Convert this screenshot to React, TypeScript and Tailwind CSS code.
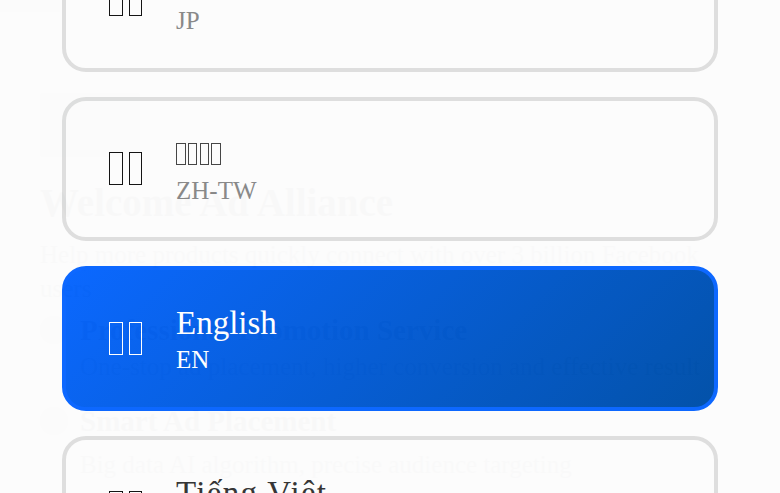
import React from "react";

const languages = [
  { label: "Japan", name: "日本語", glyphs: 0, code: "JP" },
  { label: "Taiwan", name: "繁體中文", glyphs: 4, code: "ZH-TW" },
  { label: "United States", name: "English", code: "EN", active: true },
  { label: "Vietnam", name: "Tiếng Việt", code: "VI" },
];

// missing-glyph boxes, the way the flags and CJK names come out in the picture
const Tofu = ({ className }: { className: string }) => <span className={className} />;

const App = () => {
  return (
    <div className="relative h-[493px] w-[780px] overflow-hidden bg-white font-['Liberation_Serif',serif]">
      {/* page behind the language sheet */}
      <div className="h-3 w-[60px] bg-[#d8efe0]" />
      <div className="flex flex-col px-10 pt-[81px] text-[#1c1e21]">
        <div className="h-16 w-[100px] rounded bg-[#d8efe0]" />
        <h1 className="mt-[23px] text-[39px] leading-[46px] font-bold">Welcome Ad Alliance</h1>
        <p className="mt-3 text-[25px] leading-[34px] text-[#65676b]">
          Help more products quickly connect with over 3 billion Facebook users
        </p>
        <div className="mt-[6px] flex gap-3">
          <span className="mt-1 size-7 shrink-0 rounded-full bg-[#f3e3c0]" />
          <div>
            <h2 className="text-[29px] leading-[36px] font-bold">Professional Promotion Service</h2>
            <p className="mt-[2px] text-[25px] leading-[34px] text-[#65676b]">One-stop ad placement, higher conversion and effective result</p>
          </div>
        </div>
        <div className="mt-[19px] flex gap-3">
          <span className="mt-1 size-7 shrink-0 rounded-full bg-[#f3e3c0]" />
          <div>
            <h2 className="text-[29px] leading-[36px] font-bold">Smart Ad Placement</h2>
            <p className="mt-[9px] text-[25px] leading-[34px] text-[#65676b]">Big data AI algorithm, precise audience targeting</p>
          </div>
        </div>
      </div>

      {/* language sheet */}
      <div className="absolute inset-0 bg-[#fcfcfc] opacity-[0.985]">
        <ul className="-mt-[73px] flex flex-col gap-[25px] px-[62px]">
          {languages.map((lang) => (
            <li
              key={lang.code}
              className={
                lang.active
                  ? "flex h-[144.5px] shrink-0 items-center rounded-[24px] border-4 border-[#0a66ff] bg-[linear-gradient(135deg,#0866ff,#0050a8)] pl-[42px] text-white"
                  : "flex h-[144.5px] shrink-0 items-center rounded-[24px] border-4 border-[#dedede] pl-[42px] text-[#111111]"
              }
            >
              <span role="img" aria-label={lang.label} className="flex w-[68px] shrink-0 gap-[6px] pl-px">
                <Tofu className="h-[33px] w-[13.5px] border-[1.5px] border-current" />
                <Tofu className="h-[33px] w-[13.5px] border-[1.5px] border-current" />
              </span>
              <div className="flex flex-col pt-[2px]">
                {lang.glyphs !== undefined ? (
                  <span aria-label={lang.name} className="flex h-10 items-center gap-[2.3px] text-[#444]">
                    {Array.from({ length: lang.glyphs }).map((_, i) => (
                      <Tofu key={i} className="h-[22.5px] w-[9.5px] border border-current" />
                    ))}
                  </span>
                ) : (
                  <span className={lang.code === "VI" ? "text-[33px] leading-[40px] tracking-[1.3px] text-[#333]" : "text-[33px] leading-[40px]"}>
                    {lang.name}
                  </span>
                )}
                <span className={lang.active ? "mt-[2px] text-[25px] leading-[30px] text-white" : "mt-[2px] text-[25px] leading-[30px] text-[#888888]"}>
                  {lang.code}
                </span>
              </div>
            </li>
          ))}
        </ul>
      </div>
    </div>
  );
};

export default App;
